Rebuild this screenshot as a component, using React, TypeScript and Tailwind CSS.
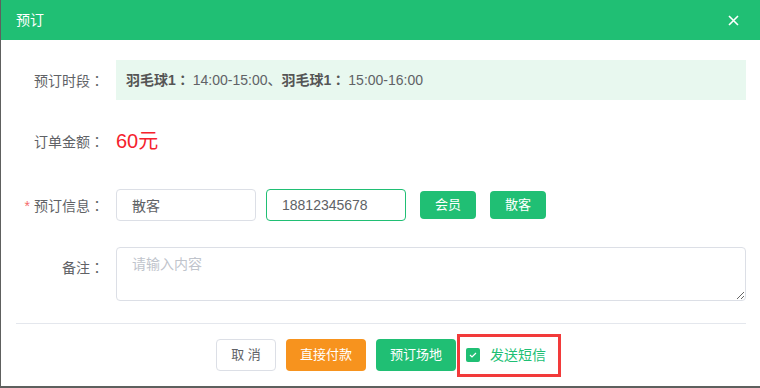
import { useState } from "react";

const font = "font-['Liberation_Sans','Noto_Sans_CJK_SC',sans-serif]";

// full-width colon drawn centred, like the original UI font does
function Colon() {
  return <span className="font-['Noto_Sans_CJK_TC',sans-serif]">：</span>;
}

function Label({ children, required }: { children: string; required?: boolean }) {
  return (
    <div className="w-[100px] shrink-0 pr-3 text-right text-[14px] leading-none text-[#606266]">
      {required && <span className="mr-1 text-[#f56c6c]">*</span>}
      {children}
      <Colon />
    </div>
  );
}

export default function App() {
  const [sms, setSms] = useState(true);

  return (
    <div className={`w-[760px] h-[388px] bg-[#5e605e] ${font}`}>
      <div className="ml-px w-[759px] h-[386px] bg-white flex flex-col">
        {/* header */}
        <div className="h-10 shrink-0 bg-[#20bf74] flex items-center justify-between pl-[15px] pr-[21px]">
          <span className="text-[14px] leading-none text-white">预订</span>
          <svg width="11" height="11" viewBox="0 0 11 11" className="text-white">
            <path d="M1 1L10 10M10 1L1 10" stroke="currentColor" strokeWidth="1.6" />
          </svg>
        </div>

        <div className="pl-[15px] pr-[14px] pt-5">
          {/* time slots */}
          <div className="flex items-center h-10">
            <Label>预订时段</Label>
            <div className="flex-1 h-10 bg-[#e8f8ef] flex items-center px-[10px] text-[14px] text-[#606266]">
              <b className="font-bold text-[#555]">
                羽毛球1<Colon />
              </b>
              <span className="ml-[3px]">14:00-15:00、</span>
              <b className="font-bold text-[#555]">
                羽毛球1<Colon />
              </b>
              <span className="ml-[3px]">15:00-16:00</span>
            </div>
          </div>

          {/* amount */}
          <div className="flex items-center h-10 mt-[21px]">
            <Label>订单金额</Label>
            <span className="text-[20px] leading-none text-[#f5222d]">60元</span>
          </div>

          {/* info */}
          <div className="flex items-center h-8 mt-7">
            <Label required>预订信息</Label>
            <input
              defaultValue="散客"
              className="w-[140px] h-8 rounded border border-[#dcdfe6] px-[15px] text-[14px] text-[#606266] outline-none"
            />
            <input
              defaultValue="18812345678"
              className="ml-[10px] w-[140px] h-8 rounded border border-[#20bf74] px-[15px] text-[14px] text-[#606266] outline-none"
            />
            <button className="ml-[14px] w-14 h-7 rounded bg-[#20bf74] text-white text-[13px]">会员</button>
            <button className="ml-[14px] w-14 h-7 rounded bg-[#20bf74] text-white text-[13px]">散客</button>
          </div>

          {/* remark */}
          <div className="flex items-start mt-[26px]">
            <div className="pt-[13px]">
              <Label>备注</Label>
            </div>
            <textarea
              placeholder="请输入内容"
              className="flex-1 h-[54px] rounded border border-[#dcdfe6] px-[15px] py-[6px] text-[14px] leading-[20px] text-[#606266] placeholder:text-[#c0c4cc] outline-none"
            />
          </div>

          <div className="mt-[22px] h-px bg-[#e4e7ed]" />

          {/* footer */}
          <div className="mt-[15px] flex items-center justify-center gap-[10px]">
            <button className="w-[60px] h-8 rounded border border-[#dcdfe6] bg-white text-[13px] text-[#606266]">
              取 消
            </button>
            <button className="w-20 h-8 rounded bg-[#f7931e] text-white text-[13px]">直接付款</button>
            <button className="w-20 h-8 rounded bg-[#20bf74] text-white text-[13px]">预订场地</button>
            <label className="relative flex items-center h-8 gap-[10px] cursor-pointer select-none">
              <span
                onClick={() => setSms(!sms)}
                className={`w-[14px] h-[14px] rounded-[2px] flex items-center justify-center ${
                  sms ? "bg-[#20bf74]" : "border border-[#dcdfe6] bg-white"
                }`}
              >
                {sms && (
                  <svg width="8" height="6" viewBox="0 0 8 6">
                    <path d="M1 3L3 5L7 1" fill="none" stroke="white" strokeWidth="1.2" />
                  </svg>
                )}
              </span>
              <span className="text-[14px] text-[#20bf74]">发送短信</span>
              <span className="absolute left-[-9px] top-[-5px] w-[104px] h-[43px] border-[3px] border-[#f23a3a] pointer-events-none" />
            </label>
          </div>
        </div>
      </div>
    </div>
  );
}
